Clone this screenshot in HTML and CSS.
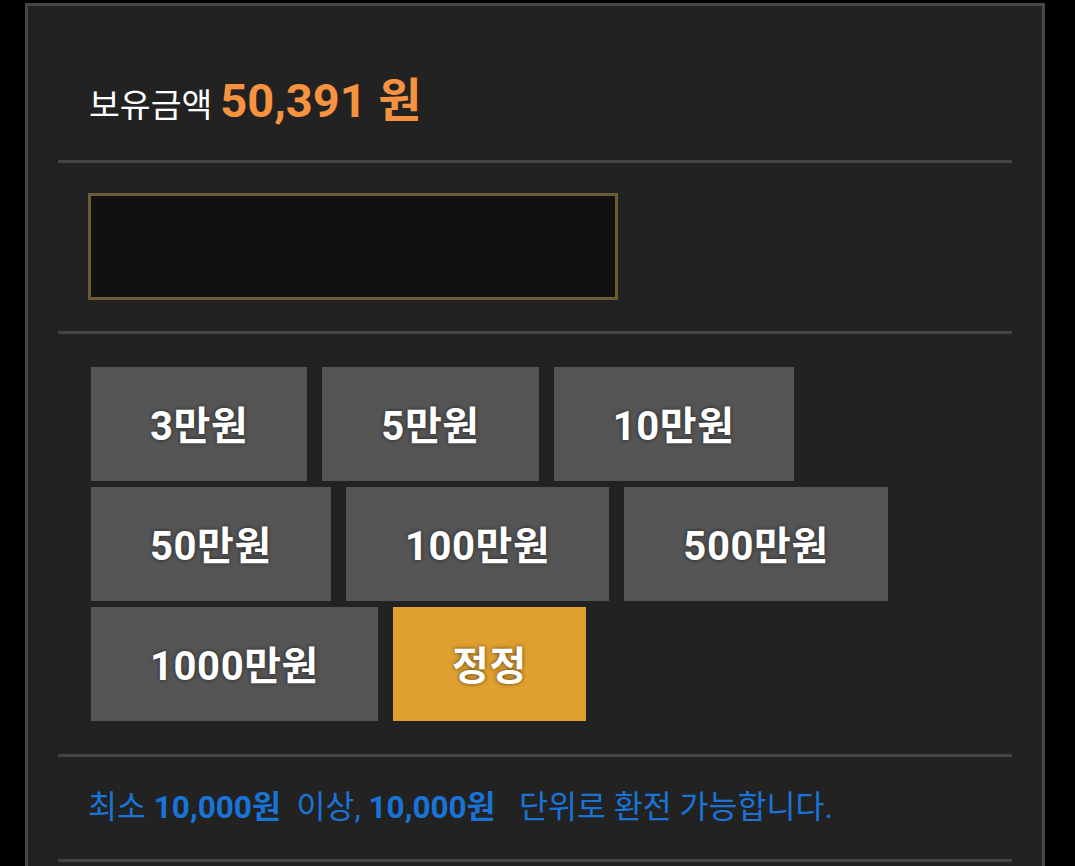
FILE: index.html
```html
<!DOCTYPE html>
<html lang="ko">
<head>
  <meta charset="utf-8">
  <title>환전</title>
  <link rel="stylesheet" href="styles.css">
</head>
<body>
  <div class="exchange">
    <div class="balance">
      <span class="balance-label">보유금액</span>
      <span class="balance-amount">50,391 원</span>
    </div>

    <div class="input-row">
      <input type="text" class="amount-input">
    </div>

    <div class="quick-btns">
      <button class="quick-btn">3만원</button>
      <button class="quick-btn">5만원</button>
      <button class="quick-btn">10만원</button>
      <button class="quick-btn">50만원</button>
      <button class="quick-btn">100만원</button>
      <button class="quick-btn">500만원</button>
      <button class="quick-btn">1000만원</button>
      <button class="quick-btn reset">정정</button>
    </div>

    <p class="notice">최소 <b>10,000원</b>&nbsp; 이상, <b>10,000원</b>&nbsp;&nbsp; 단위로 환전 가능합니다.</p>
  </div>
</body>
</html>
```

FILE: styles.css
```css
body {
  margin: 0;
  background-color: #000;
  font-family: Roboto, "Noto Sans CJK KR", sans-serif;
}

.exchange {
  margin: 3px 0 0 25px;
  padding: 0 30px;
  box-sizing: border-box;
  width: 1020px;
  min-height: 900px;
  background-color: #222;
  border: 3px solid #464646;
}

/* 보유금액 */
.balance {
  height: 157px;
  box-sizing: border-box;
  padding: 69px 31px 0;
  border-bottom: 3px solid #444;
  line-height: 52px;
}

.balance-label {
  color: #fff;
  font-size: 33.5px;
}

.balance-amount {
  margin-left: 4px;
  color: #f79240;
  font-size: 47px;
  font-weight: bold;
}

/* 입력칸 */
.input-row {
  padding: 30px 30px 31px;
  border-bottom: 3px solid #444;
}

.amount-input {
  display: block;
  width: 530px;
  height: 107px;
  box-sizing: border-box;
  margin: 0;
  border: 3px solid #6b5c36;
  background-color: #111;
  color: #fff;
  font-size: 32px;
  outline: none;
}

/* 금액 버튼 */
.quick-btns {
  display: flex;
  flex-wrap: wrap;
  gap: 6px 15px;
  padding: 33px 0 33px 33px;
  border-bottom: 3px solid #444;
}

.quick-btn {
  height: 114px;
  padding: 0 59px 3px;
  border: none;
  background-color: #555;
  color: #fff;
  font-family: Roboto, "Noto Sans CJK KR", sans-serif;
  font-size: 40px;
  font-weight: bold;
  letter-spacing: 0.6px;
  text-shadow: 0 0 4px rgba(0, 0, 0, 0.6);
  cursor: pointer;
}

.quick-btn.reset {
  background-color: #e0a030;
}

/* 안내문 */
.notice {
  margin: 0;
  height: 105px;
  box-sizing: border-box;
  padding: 31px 0 0 30px;
  border-bottom: 3px solid #444;
  color: #1a74d8;
  font-size: 31.5px;
  line-height: 40px;
}
```
